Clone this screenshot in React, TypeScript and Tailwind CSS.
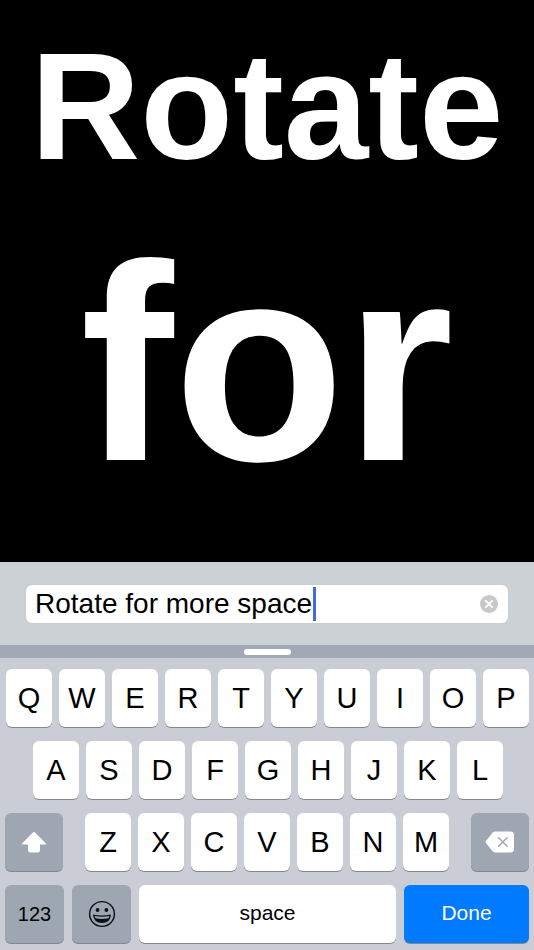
import { useState } from "react";
import type { ReactNode } from "react";

const TOP_ROW = ["Q", "W", "E", "R", "T", "Y", "U", "I", "O", "P"];
const HOME_ROW = ["A", "S", "D", "F", "G", "H", "J", "K", "L"];
const BOTTOM_ROW = ["Z", "X", "C", "V", "B", "N", "M"];

const KEY_BASE =
  "flex h-[58px] items-center justify-center rounded-md shadow-[0_1px_0_#84878d]";

function LetterKey({ letter, onPress }: { letter: string; onPress: (s: string) => void }) {
  return (
    <button
      type="button"
      onClick={() => onPress(letter)}
      className={`${KEY_BASE} min-w-0 flex-1 bg-white text-[29px] leading-8 text-black`}
    >
      {letter}
    </button>
  );
}

function DarkKey({
  label,
  size,
  onPress,
  children,
}: {
  label: string;
  size: string;
  onPress?: () => void;
  children: ReactNode;
}) {
  return (
    <button
      type="button"
      aria-label={label}
      onClick={onPress}
      className={`${KEY_BASE} ${size} shrink-0 bg-[#9da6b1] text-black`}
    >
      {children}
    </button>
  );
}

function ShiftIcon() {
  return (
    <svg width="26" height="22" viewBox="0 0 26 22" fill="#fff" aria-hidden="true">
      <path d="M12.2 1.3Q13 .6 13.8 1.3L24.8 12.2Q25.8 13.6 24.3 13.6H19V19.2Q19 21.4 16.8 21.4H9.2Q7 21.4 7 19.2V13.6H1.7Q.2 13.6 1.2 12.2Z" />
    </svg>
  );
}

function DeleteIcon() {
  return (
    <svg width="30" height="22" viewBox="0 0 30 22" aria-hidden="true">
      <path
        d="M10.2 .6H25.6Q29 .6 29 4V18Q29 21.4 25.6 21.4H10.2Q8.8 21.4 7.8 20.4L1.3 12.6Q0 11 1.3 9.4L7.8 1.6Q8.8 .6 10.2 .6Z"
        fill="#fff"
      />
      <path d="M13.2 6.2L22.6 15.8M22.6 6.2L13.2 15.8" stroke="#9da6b1" strokeWidth="1.4" />
    </svg>
  );
}

function EmojiIcon() {
  return (
    <svg width="28" height="28" viewBox="0 0 28 28" aria-hidden="true">
      <circle cx="14" cy="14" r="12.4" fill="none" stroke="#0b0f14" strokeWidth="1.4" />
      <circle cx="9.6" cy="10" r="1.9" fill="#0b0f14" />
      <circle cx="18.4" cy="10" r="1.9" fill="#0b0f14" />
      <path
        d="M5 14.4Q14 16.6 23 14.4Q22.4 23 14 23Q5.6 23 5 14.4Z"
        fill="#0b0f14"
      />
      <path
        d="M6.6 15.9Q14 17.5 21.4 15.9Q21.1 17.2 20.5 18.2Q14 19.7 7.5 18.2Q6.9 17.2 6.6 15.9Z"
        fill="#9da6b1"
      />
    </svg>
  );
}

function ClearIcon() {
  return (
    <svg width="18" height="18" viewBox="0 0 18 18" aria-hidden="true">
      <circle cx="9" cy="9" r="9" fill="#c8c8ca" />
      <path d="M5.3 5.3L12.7 12.7M12.7 5.3L5.3 12.7" stroke="#fff" strokeWidth="1.8" />
    </svg>
  );
}

export default function App() {
  const [message, setMessage] = useState("Rotate for more space");
  const press = (s: string) => setMessage((m) => m + s);

  return (
    <div className="flex min-h-screen flex-col bg-black font-['Liberation_Sans',Arial,sans-serif]">
      <main className="flex-1 overflow-hidden text-center font-bold text-white">
        <p className="text-[152px] leading-[212px]">Rotate</p>
        <p className="text-[280px] leading-[302px]">for</p>
      </main>

      <section className="bg-[#ccd1d5] px-[26px] pt-[23px] pb-[22px]">
        <div className="flex h-[38px] items-center rounded-md bg-white pr-[10px] pl-[9px] shadow-[0_0_1px_#b4b8bd]">
          <input
            type="text"
            aria-label="Message"
            value={message}
            onChange={(e) => setMessage(e.target.value)}
            className="field-sizing-content h-[34px] min-w-0 bg-transparent p-0 text-[28px] leading-[34px] text-black caret-transparent outline-none"
          />
          <span className="ml-px h-[34px] w-[3px] shrink-0 bg-[#4468e0]" />
          <button
            type="button"
            aria-label="Clear text"
            onClick={() => setMessage("")}
            className="ml-auto"
          >
            <ClearIcon />
          </button>
        </div>
      </section>

      <div className="flex h-[13px] items-center justify-center bg-[#a0a9b5]">
        <span className="h-[6px] w-[47px] rounded-full bg-white" />
      </div>

      <section
        aria-label="Keyboard"
        className="flex flex-col gap-[14px] bg-[#cacdd5] pt-[11px] pb-[7px]"
      >
        <div className="flex gap-[7px] pr-[5px] pl-[6px]">
          {TOP_ROW.map((k) => (
            <LetterKey key={k} letter={k} onPress={press} />
          ))}
        </div>
        <div className="flex gap-[7px] pr-[31px] pl-[33px]">
          {HOME_ROW.map((k) => (
            <LetterKey key={k} letter={k} onPress={press} />
          ))}
        </div>
        <div className="flex gap-[22px] px-[5px]">
          <DarkKey label="Shift" size="w-[58px]">
            <ShiftIcon />
          </DarkKey>
          <div className="flex min-w-0 flex-1 gap-[7px]">
            {BOTTOM_ROW.map((k) => (
              <LetterKey key={k} letter={k} onPress={press} />
            ))}
          </div>
          <DarkKey
            label="Delete"
            size="w-[58px]"
            onPress={() => setMessage((m) => m.slice(0, -1))}
          >
            <DeleteIcon />
          </DarkKey>
        </div>
        <div className="flex gap-2 px-[5px]">
          <DarkKey label="123" size="w-[59px]">
            <span className="text-[20px] leading-6">123</span>
          </DarkKey>
          <DarkKey label="Emoji" size="w-[59px]">
            <EmojiIcon />
          </DarkKey>
          <button
            type="button"
            onClick={() => press(" ")}
            className={`${KEY_BASE} min-w-0 flex-1 bg-white pb-0.5 text-[21px] leading-6 text-black`}
          >
            space
          </button>
          <button
            type="button"
            className={`${KEY_BASE} w-[125px] shrink-0 bg-[#007aff] pb-0.5 text-[21px] leading-6 text-white`}
          >
            Done
          </button>
        </div>
      </section>
    </div>
  );
}
